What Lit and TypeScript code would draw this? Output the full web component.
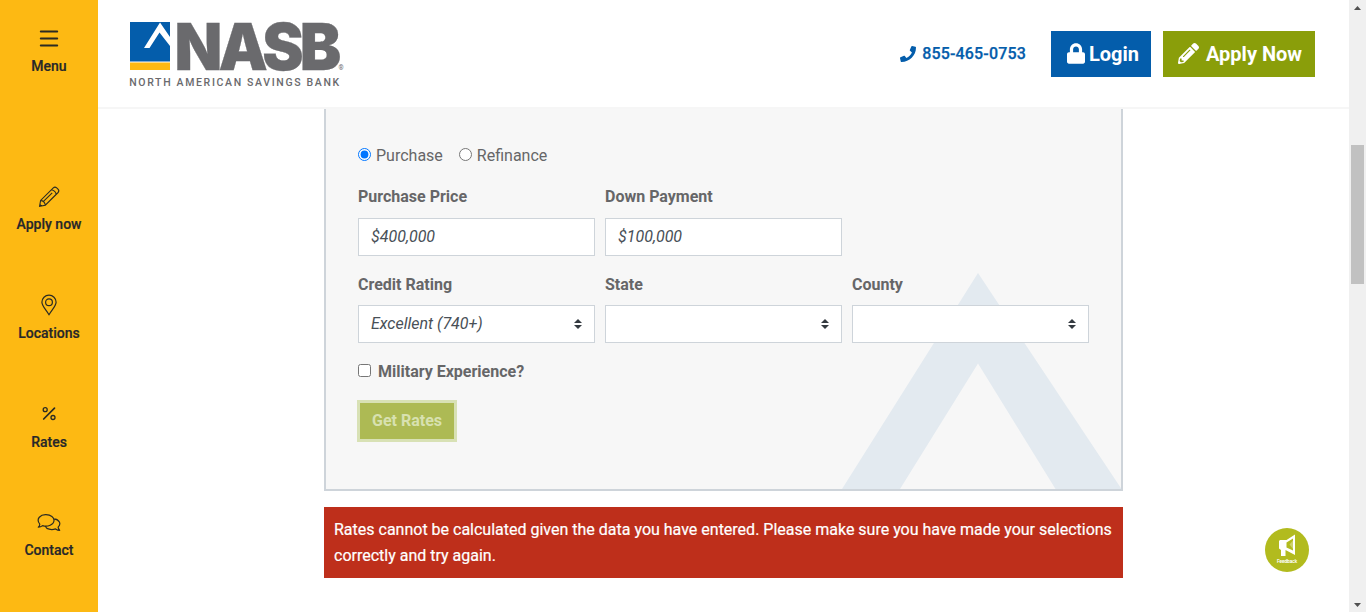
import { LitElement, html, svg, css } from "lit";
import { customElement, property } from "lit/decorators.js";

const navIcons: Record<string, unknown> = {
  menu: svg`<path d="M4.8 7.5h16.4M4.8 14.5h16.4M4.8 21.5h16.4" stroke-width="2" stroke-linecap="round"/>`,
  pencil: svg`<path d="M3.6 24.2 4.6 18.4 17.3 5.8Q19 4.300 20.700 5.900L22 7.200Q23.600 8.900 22.100 10.500L9.300 23.200ZM15.400 7.700Q19.500 8.500 20.200 12.300M4.600 18.400Q8.600 18.800 9.300 23.200M7.200 19.600 16.200 10.800M3.900 22.200 5.400 24" stroke-width="1.100"/>`,
  pin: svg`<path d="M13 23.700C10.300 19.200 5.900 15 5.900 11.300a7.100 7.100 0 0 1 14.200 0C20.100 15 15.700 19.200 13 23.700Z" stroke-width="1.200"/><circle cx="13" cy="11.300" r="3.400" stroke-width="1.200"/>`,
  percent: svg`<path d="M18.500 8.200 7.700 19" stroke-width="1.700" stroke-linecap="round"/><circle cx="9.200" cy="9.700" r="2" stroke-width="1.300"/><circle cx="17" cy="17.500" r="2" stroke-width="1.300"/>`,
  chat: svg`<path d="M2.300 19.200Q4 17.700 3.700 16C-.500 10.600 4.800 6.500 10 6.700c5 .100 8.100 2.900 8 5.800-.100 4.100-6.400 6.800-11.400 5.100Q4.700 19.100 2.300 19.200ZM17.900 10.800c5.600.500 7.600 5.200 4.200 8.300Q22.200 20.600 23.700 22.300 21.600 22.300 19.600 20.900C15 22.400 10.500 21.100 9.300 18.200" stroke-width="1.200" stroke-linejoin="round"/>`,
};

@customElement("nav-item")
class NavItem extends LitElement {
  @property() icon = "";
  @property() label = "";
  static styles = css`
    :host { display: flex; flex-direction: column; align-items: center; height: 55px; }
    svg { width: 26px; height: 28px; fill: none; stroke: #2b2b23; display: block; }
    span { font: 500 14px/20px Roboto, sans-serif; color: #27272a; margin-top: 4px; white-space: nowrap; -webkit-text-stroke: .2px #27272a; }
  `;
  render() {
    return html`<svg viewBox="0 0 26 28">${navIcons[this.icon]}</svg><span>${this.label}</span>`;
  }
}

@customElement("form-field")
class FormField extends LitElement {
  @property() label = "";
  @property() value = "";
  @property({ type: Boolean }) select = false;
  static styles = css`
    :host { display: flex; flex-direction: column; width: 237px; }
    label { font: 700 16px/24px Roboto, sans-serif; color: #666668; margin-bottom: 9px; }
    .box { box-sizing: border-box; height: 38px; border: 1px solid #ced4da; background: #fff; padding: 0 12px;
      display: flex; align-items: center; justify-content: space-between;
      font: italic 400 16px/24px Roboto, sans-serif; color: #495057; }
    :host([select]) label { margin-bottom: 8px; }
    svg { width: 8px; height: 10px; fill: #343a40; }
  `;
  render() {
    return html`<label>${this.label}</label>
      <div class="box"><span>${this.value}</span>
        ${this.select ? html`<svg viewBox="0 0 4 5"><path d="M2 0 0 2h4zm0 5L0 3h4z"/></svg>` : ""}
      </div>`;
  }
}

@customElement("app-root")
class AppRoot extends LitElement {
  static styles = css`
    :host { display: flex; width: 1366px; height: 612px; overflow: hidden; background: #fff; font-family: Roboto, sans-serif; color: #666668; }
    nav { width: 98px; box-sizing: border-box; background: #fdb913; padding-top: 24px; display: flex; flex-direction: column; }
    .menu { margin-bottom: 103px; }
    .links { display: flex; flex-direction: column; gap: 53.800px; }
    main { flex: 1; display: flex; flex-direction: column; min-width: 0; }
    header { height: 107px; border-bottom: 2px solid #f6f6f6; display: flex; flex: none; align-items: center; padding: 0 34px 0 31px; }
    .logo { width: 218px; height: 73px; margin-right: auto; overflow: visible; }
    .phone { display: flex; align-items: center; gap: 6px; font-weight: 500; font-size: 16px; letter-spacing: .17px; color: #045dab; margin-right: 25px; -webkit-text-stroke: .25px #045dab; }
    .phone svg { width: 16px; height: 16px; fill: #045dab; }
    .btn { height: 46px; box-sizing: border-box; display: flex; align-items: center; color: #fff; font-weight: 700; font-size: 20px; white-space: nowrap; }
    .btn svg { fill: #fff; display: block; }
    .login { background: #045dab; width: 100px; padding-left: 16px; gap: 4px; margin-right: 12px; }
    .login svg { width: 18px; height: 21px; }
    .apply { background: #8a9e0a; width: 152px; padding-left: 15px; gap: 7px; }
    .apply svg { width: 21px; height: 21px; }
    .content { width: 799px; margin-left: 226px; }
    .panel { box-sizing: border-box; height: 382px; border: 2px solid #ced4da; border-top: 0; background: #f7f7f7; padding: 35px 32px 0; display: grid; }
    .panel > * { grid-area: 1 / 1; }
    .mark { width: 280px; height: 216px; fill: #e3eaf0; justify-self: end; align-self: end; margin-right: -32px; }
    .form { position: relative; }
    .radios { display: flex; height: 24px; align-items: center; font-size: 16px; line-height: 24px; }
    input { margin: 0; width: 13px; height: 13px; }
    .radios label { display: flex; align-items: center; gap: 5px; margin-right: 16px; }
    .radios input, .check input { margin-top: -3px; }
    .row { display: flex; gap: 10px; }
    .first { margin-top: 17px; }
    .second { margin-top: 17px; }
    .check { display: flex; align-items: center; gap: 7px; font-weight: 700; font-size: 16px; line-height: 24px; margin-top: 17px; }
    .rates { width: 94px; height: 36px; margin: 19px 0 0 2px; box-shadow: 0 0 0 3px #d8e1b5; background: #adba54; color: #d8e1b0; font-weight: 700; font-size: 16px; line-height: 35px; text-align: center; }
    .alert { box-sizing: border-box; height: 71px; margin-top: 16px; padding: 10px; background: #be2f1b; color: #fff; font-size: 16px; line-height: 26px; -webkit-text-stroke: .2px #fff; }
    .scroll { width: 17px; background: #f0f0f0; display: flex; flex-direction: column; align-items: center; box-sizing: border-box; padding: 6px 0 5px; }
    .scroll svg { width: 7px; height: 4px; fill: #505050; flex: none; }
    .thumb { width: 13px; height: 139px; background: #c1c1c1; margin: 135px 0 auto; }
    .feedback { position: absolute; left: 1265px; top: 528px; width: 44px; height: 44px; }
  `;

  render() {
    return html`
      <nav>
        <nav-item class="menu" icon="menu" label="Menu"></nav-item>
        <div class="links">
          <nav-item icon="pencil" label="Apply now"></nav-item>
          <nav-item icon="pin" label="Locations"></nav-item>
          <nav-item icon="percent" label="Rates"></nav-item>
          <nav-item icon="chat" label="Contact"></nav-item>
        </div>
      </nav>
      <main>
        <header>
          <svg class="logo" viewBox="0 0 218 73">
            <path fill="#045dab" d="M1 5h40v39.500H1z"/><path fill="#fdb913" d="M1 45.500h40V53H1z"/>
            <path fill="#fff" d="M31 5.500 41 20v9L30.500 15.500 20.500 31H15z"/>
            <text x="45.500" y="52.700" textLength="163" lengthAdjust="spacingAndGlyphs" letter-spacing="-4" fill="#6a6a6d" stroke="#6a6a6d" stroke-width=".3" font-family="Inter, sans-serif" font-weight="900" font-size="65">NASB</text>
            <text x="0.200" y="69" textLength="210" fill="#6a6a6d" font-family="Roboto, sans-serif" font-weight="500" font-size="10.500">NORTH AMERICAN SAVINGS BANK</text>
            <text x="209.500" y="52.500" fill="#6a6a6d" font-family="Roboto, sans-serif" font-size="6.500">®</text>
          </svg>
          <div class="phone">
            <svg viewBox="0 0 512 512"><path d="M493.400 24.600l-104-24c-11.300-2.600-22.900 3.300-27.500 13.900l-48 112c-4.200 9.800-1.400 21.300 6.900 28l60.600 49.600c-36 76.700-98.900 140.500-177.200 177.200l-49.600-60.600c-6.800-8.300-18.200-11.100-28-6.900l-112 48C3.900 366.500-2 378.100.600 389.400l24 104C27.100 504.200 36.700 512 48 512c256.100 0 464-207.500 464-464 0-11.200-7.700-20.900-18.600-23.400z"/></svg>
            <span>855-465-0753</span>
          </div>
          <div class="btn login">
            <svg viewBox="0 0 448 512"><path d="M400 224h-24v-72C376 68.200 307.800 0 224 0S72 68.200 72 152v72H48c-26.500 0-48 21.500-48 48v192c0 26.500 21.500 48 48 48h352c26.500 0 48-21.500 48-48V272c0-26.500-21.500-48-48-48zm-104 0H152v-72c0-39.700 32.300-72 72-72s72 32.300 72 72v72z"/></svg>
            <span>Login</span>
          </div>
          <div class="btn apply">
            <svg viewBox="0 0 512 512"><path d="M497.900 142.100l-46.100 46.100c-4.700 4.700-12.300 4.700-17 0l-111-111c-4.700-4.700-4.700-12.300 0-17l46.100-46.100c18.700-18.700 49.100-18.700 67.900 0l60.100 60.100c18.800 18.700 18.800 49.100 0 67.900zM284.200 99.800L21.600 362.400.400 483.900c-2.900 16.400 11.400 30.600 27.800 27.800l121.500-21.300 262.600-262.600c4.700-4.700 4.700-12.300 0-17l-111-111c-4.800-4.700-12.400-4.700-17.100 0zM124.100 339.900c-5.500-5.500-5.500-14.300 0-19.800l154-154c5.500-5.500 14.300-5.500 19.800 0s5.500 14.300 0 19.800l-154 154c-5.500 5.500-14.300 5.500-19.800 0zM88 424h48v36.300l-64.500 11.300-31.100-31.100L51.700 376H88v48z"/></svg>
            <span>Apply Now</span>
          </div>
        </header>
        <div class="content">
          <div class="panel">
            <svg class="mark" viewBox="0 0 280 216"><path d="M137 0 280.500 216h-66L137 90.500 59 216H1z"/></svg>
            <div class="form">
              <div class="radios">
                <label><input type="radio" name="loan" checked />Purchase</label>
                <label><input type="radio" name="loan" />Refinance</label>
              </div>
              <div class="row first">
                <form-field label="Purchase Price" value="$400,000"></form-field>
                <form-field label="Down Payment" value="$100,000"></form-field>
              </div>
              <div class="row second">
                <form-field select label="Credit Rating" value="Excellent (740+)"></form-field>
                <form-field select label="State"></form-field>
                <form-field select label="County"></form-field>
              </div>
              <label class="check"><input type="checkbox" />Military Experience?</label>
              <div class="rates">Get Rates</div>
            </div>
          </div>
          <div class="alert">Rates cannot be calculated given the data you have entered. Please make sure you have made your selections correctly and try again.</div>
        </div>
      </main>
      <div class="scroll">
        <svg viewBox="0 0 7 4"><path d="M3.500 0 7 4H0z"/></svg>
        <div class="thumb"></div>
        <svg viewBox="0 0 7 4"><path d="M0 0h7L3.500 4z"/></svg>
      </div>
      <svg class="feedback" viewBox="0 0 44 44">
        <circle cx="22" cy="22" r="22" fill="#b2bb1e"/>
        <path fill="#fff" d="M15 12h6.500L30 6.500V27L20.500 22v6H16v-6L14 20.500V13Z"/>
        <path fill="#b2bb1e" d="M21.500 14.500 28 10.500V22.500L21.500 19.500Z"/><path fill="#fff" d="M24.500 16.500 28 12.500v8.500z" opacity=".35"/>
        <text x="22" y="35" text-anchor="middle" textLength="20" lengthAdjust="spacingAndGlyphs" fill="#fff" stroke="#fff" stroke-width=".15" font-family="Roboto, sans-serif" font-size="5.500">Feedback</text>
      </svg>
    `;
  }
}
